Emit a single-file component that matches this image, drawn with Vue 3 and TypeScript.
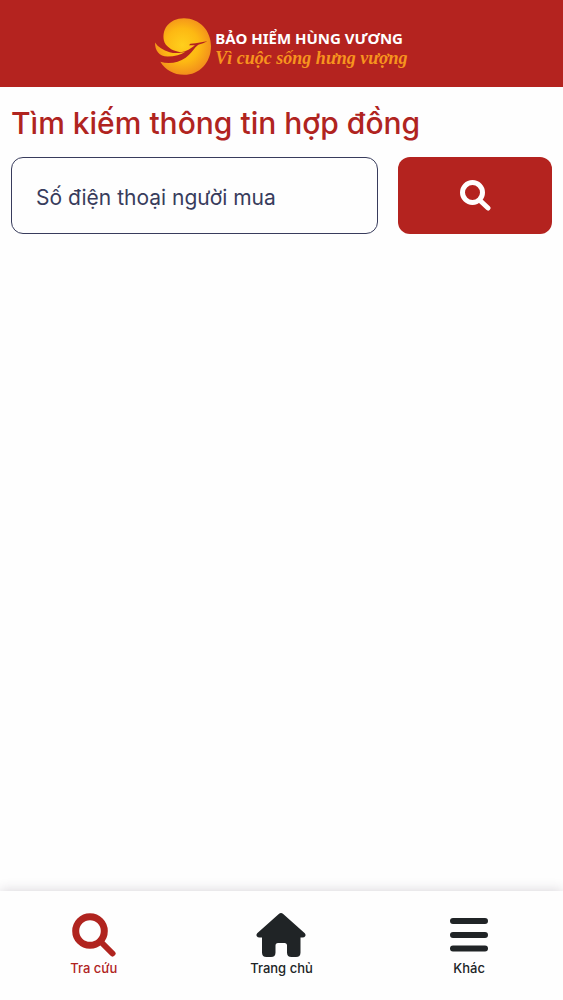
<script setup lang="ts">
import { ref } from 'vue'

interface NavItem {
  id: string
  label: string
}

const phone = ref('')
const active = ref('search')
const items: NavItem[] = [
  { id: 'search', label: 'Tra cứu' },
  { id: 'home', label: 'Trang chủ' },
  { id: 'more', label: 'Khác' },
]
</script>

<template>
  <div class="page">
    <header class="header">
      <a class="brand" href="#">
        <svg class="brand-mark" viewBox="18 24 168 170" aria-hidden="true">
          <defs>
            <radialGradient id="sun" gradientUnits="userSpaceOnUse" cx="100" cy="105" r="92">
              <stop offset="0" stop-color="#ffcf1c" />
              <stop offset="0.55" stop-color="#fdb813" />
              <stop offset="1" stop-color="#f28c1c" />
            </radialGradient>
          </defs>
          <path fill="url(#sun)" d="M47 98C34 60 60 24 105 24C151 24 186 60 186 108C186 157 151 194 105 194C74 194 49 180 34 155C60 163 88 158 110 143C128 130 136 112 148 104C158 100 167 98 175 93C162 95 146 98 124 101L120 105L138 105C126 114 112 124 96 126C74 124 56 114 47 98Z" />
          <path fill="url(#sun)" d="M18 97C18 122 30 139 56 139C77 139 96 134 110 124C92 130 76 130 62 126C42 120 27 111 18 97Z" />
        </svg>
        <span class="brand-text">
          <span class="brand-name">BẢO HIỂM HÙNG VƯƠNG</span>
          <span class="brand-slogan">Vì cuộc sống hưng vượng</span>
        </span>
      </a>
    </header>

    <main class="content">
      <h1 class="title">Tìm kiếm thông tin hợp đồng</h1>
      <form class="search" @submit.prevent>
        <input v-model="phone" class="field" type="tel" placeholder="Số điện thoại người mua" aria-label="Số điện thoại người mua" />
        <button class="submit" type="submit" aria-label="Tìm kiếm">
          <svg class="submit-icon" viewBox="0 0 32 32" fill="none" stroke="currentColor" aria-hidden="true">
            <circle cx="13.5" cy="12.5" r="10" stroke-width="5" />
            <path d="M21 20.5L29 28" stroke-width="5" stroke-linecap="round" />
          </svg>
        </button>
      </form>
    </main>

    <nav class="nav">
      <button
        v-for="item in items"
        :key="item.id"
        type="button"
        class="nav-item"
        :class="{ active: active === item.id }"
        @click="active = item.id"
      >
        <svg v-if="item.id === 'search'" class="nav-icon" viewBox="0 0 50 44" fill="none" stroke="currentColor" aria-hidden="true">
          <circle cx="21" cy="18" r="14.3" stroke-width="7" />
          <path d="M32 29L43.5 40.5" stroke-width="6" stroke-linecap="round" />
        </svg>
        <svg v-else-if="item.id === 'home'" class="nav-icon" viewBox="0 0 50 44" fill="currentColor" aria-hidden="true">
          <path d="M22.8 1Q25 -1 27.2 1L48.8 20.2Q50.2 22 49 23.6Q48.4 24.5 46.5 24.5H44.5V39.5Q44.5 44 40 44H35.5Q31 44 31 39.5V32.5Q31 30 28.5 30H22Q19.5 30 19.5 32.5V39.5Q19.5 44 15 44H10.5Q6 44 6 39.5V24.5H3.5Q1.6 24.5 1 23.6Q-.2 22 1.2 20.2Z" />
        </svg>
        <svg v-else class="nav-icon" viewBox="0 0 50 44" fill="none" stroke="currentColor" stroke-width="6" stroke-linecap="round" aria-hidden="true">
          <path d="M9 8H41M9 22H41M9 35.5H41" />
        </svg>
        <span>{{ item.label }}</span>
      </button>
    </nav>
  </div>
</template>

<style>
body {
  margin: 0;
  background: #fefefe;
}
</style>

<style scoped>
.page {
  display: flex;
  flex-direction: column;
  min-height: 100vh;
  font-family: Inter, "Liberation Sans", sans-serif;
  background: #fefefe;
}

.header {
  display: flex;
  justify-content: center;
  padding: 18px 12px 12px;
  background: #b4231f;
}

.brand {
  display: flex;
  gap: 4px;
  text-decoration: none;
}

.brand-mark {
  width: 56px;
  height: 57px;
}

.brand-text {
  display: flex;
  flex-direction: column;
  padding-top: 9px;
  white-space: nowrap;
}

.brand-name {
  font-family: "Noto Sans", sans-serif;
  font-size: 15px;
  font-weight: 700;
  line-height: 22px;
  color: #fff;
}

.brand-slogan {
  font-family: "Liberation Serif", serif;
  font-size: 18px;
  font-style: italic;
  font-weight: 700;
  line-height: 18px;
  color: #f7941e;
}

.content {
  flex: 1;
  padding: 16px 11px;
}

.title {
  margin: 0 0 14px;
  font-size: 30px;
  font-weight: 500;
  line-height: 40px;
  color: #b0241f;
}

.search {
  display: grid;
  grid-template-columns: minmax(0, 1fr) 154px;
  gap: 20px;
}

.field {
  box-sizing: border-box;
  width: 100%;
  height: 77px;
  padding: 4px 24px 0;
  border: 1px solid #383c5c;
  border-radius: 12px;
  font: 400 21px "Inter", sans-serif;
  color: #383c5c;
  background: transparent;
}

.field::placeholder {
  color: #383c5c;
  opacity: 1;
}

.submit {
  display: flex;
  align-items: center;
  justify-content: center;
  padding: 0;
  border: 0;
  border-radius: 12px;
  color: #fff;
  background: #b4231f;
}

.submit-icon {
  width: 32px;
  height: 32px;
}

.nav {
  display: grid;
  grid-template-columns: repeat(3, 1fr);
  background: #fefefe;
  box-shadow: 0 0 12px rgba(50, 35, 60, 0.2);
}

.nav-item {
  display: flex;
  flex-direction: column;
  align-items: center;
  gap: 3px;
  padding: 22px 0 24px;
  border: 0;
  font: 500 13px/16px "Inter", sans-serif;
  color: #202426;
  background: transparent;
}

.nav-item.active {
  color: #b0241f;
}

.nav-icon {
  width: 50px;
  height: 44px;
}
</style>
